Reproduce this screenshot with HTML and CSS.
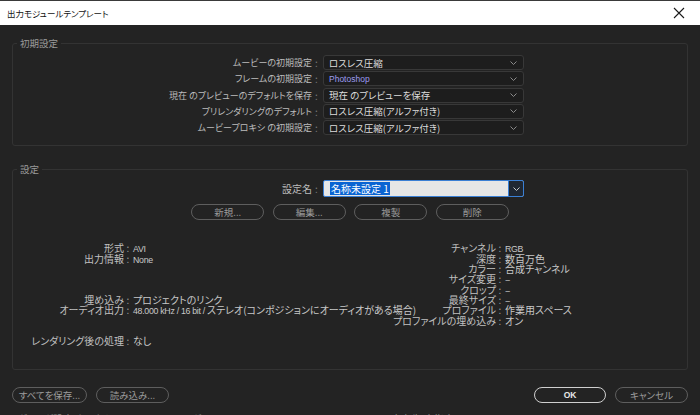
FILE: index.html
```html
<!DOCTYPE html>
<html lang="ja">
<head>
<meta charset="utf-8">
<title>出力モジュールテンプレート</title>
<link rel="stylesheet" href="styles.css">
</head>
<body>
<div class="window">
  <div class="titlebar">
    <span class="title">出力モジュールテンプレート</span>
    <svg class="close" width="12" height="12" viewBox="0 0 12 12"><path d="M1 1 L11 11 M11 1 L1 11" stroke="#1a1a1a" stroke-width="1.1" fill="none"/></svg>
  </div>
  <div class="content">
    <fieldset class="group group-defaults">
      <legend>初期設定</legend>
      <div class="form-grid">
        <span class="lbl">ムービーの初期設定</span><span class="colon">:</span>
        <div class="select"><span>ロスレス圧縮</span><svg class="chev" width="7" height="4" viewBox="0 0 7 4"><path d="M0.5 0.5 L3.5 3.5 L6.5 0.5" stroke="#8a8a8a" fill="none"/></svg></div>
        <span class="lbl">フレームの初期設定</span><span class="colon">:</span>
        <div class="select"><span class="ps">Photoshop</span><svg class="chev" width="7" height="4" viewBox="0 0 7 4"><path d="M0.5 0.5 L3.5 3.5 L6.5 0.5" stroke="#8a8a8a" fill="none"/></svg></div>
        <span class="lbl">現在 のプレビューのデフォルトを保存</span><span class="colon">:</span>
        <div class="select"><span>現在 のプレビューを保存</span><svg class="chev" width="7" height="4" viewBox="0 0 7 4"><path d="M0.5 0.5 L3.5 3.5 L6.5 0.5" stroke="#8a8a8a" fill="none"/></svg></div>
        <span class="lbl">プリレンダリングのデフォルト</span><span class="colon">:</span>
        <div class="select"><span>ロスレス圧縮（アルファ付き）</span><svg class="chev" width="7" height="4" viewBox="0 0 7 4"><path d="M0.5 0.5 L3.5 3.5 L6.5 0.5" stroke="#8a8a8a" fill="none"/></svg></div>
        <span class="lbl">ムービープロキシ の初期設定</span><span class="colon">:</span>
        <div class="select"><span>ロスレス圧縮（アルファ付き）</span><svg class="chev" width="7" height="4" viewBox="0 0 7 4"><path d="M0.5 0.5 L3.5 3.5 L6.5 0.5" stroke="#8a8a8a" fill="none"/></svg></div>
      </div>
    </fieldset>

    <fieldset class="group group-settings">
      <legend>設定</legend>
      <div class="form-grid name-row">
        <span class="lbl">設定名</span><span class="colon">:</span>
        <div class="combo">
          <span class="combo-text"><span class="selected">名称未設定 1</span></span>
          <span class="combo-btn"><svg width="7" height="4" viewBox="0 0 7 4"><path d="M0.5 0.5 L3.5 3.5 L6.5 0.5" stroke="#c8c8c8" fill="none"/></svg></span>
        </div>
      </div>
      <div class="btn-row">
        <button class="pill">新規...</button>
        <button class="pill">編集...</button>
        <button class="pill">複製</button>
        <button class="pill">削除</button>
      </div>
      <div class="info">
        <div class="info-block left">
          <span class="k">形式</span><span class="c">:</span><span class="v"><span class="lat">AVI</span></span>
          <span class="k">出力情報</span><span class="c">:</span><span class="v"><span class="lat">None</span></span>
          <span class="blank"></span><span class="blank"></span><span class="blank"></span>
          <span class="k">埋め込み</span><span class="c">:</span><span class="v">プロジェクトのリンク</span>
          <span class="k">オーディオ出力</span><span class="c">:</span><span class="v"><span class="lat">48.000 kHz / 16 bit / </span>ステレオ（コンポジションにオーディオがある場合）</span>
          <span class="blank"></span><span class="blank"></span>
          <span class="k">レンダリング後の処理</span><span class="c">:</span><span class="v">なし</span>
        </div>
        <div class="info-block right">
          <span class="k">チャンネル</span><span class="c">:</span><span class="v"><span class="lat">RGB</span></span>
          <span class="k">深度</span><span class="c">:</span><span class="v">数百万色</span>
          <span class="k">カラー</span><span class="c">:</span><span class="v">合成チャンネル</span>
          <span class="k">サイズ変更</span><span class="c">:</span><span class="v">–</span>
          <span class="k">クロップ</span><span class="c">:</span><span class="v">–</span>
          <span class="k">最終サイズ</span><span class="c">:</span><span class="v">–</span>
          <span class="k">プロファイル</span><span class="c">:</span><span class="v">作業用スペース</span>
          <span class="k">プロファイルの埋め込み</span><span class="c">:</span><span class="v">オン</span>
        </div>
      </div>
    </fieldset>

    <div class="footer">
      <div class="footer-group">
        <button class="pill wide">すべてを保存...</button>
        <button class="pill">読み込み...</button>
      </div>
      <div class="footer-group">
        <button class="pill primary">OK</button>
        <button class="pill">キャンセル</button>
      </div>
    </div>
  </div>
  <div class="under">
    <span>レンダリング設定：カスタム</span>
    <span>ログ：</span>
    <span>エラーのみ</span>
    <span>出力先：未指定</span>
  </div>
</div>
</body>
</html>
```

FILE: styles.css
```css
* { box-sizing: border-box; }

html, body {
  margin: 0;
  padding: 0;
  background: #232323;
  height: 415px;
  overflow: hidden;
}

body {
  font-family: "Noto Sans CJK JP", "Noto Sans", sans-serif;
  font-size: 10px;
  color: #bdbdbd;
  font-feature-settings: "palt" 1;
  font-variant-east-asian: proportional-width;
}

.window {
  width: 700px;
  height: 415px;
  overflow: hidden;
}

.titlebar {
  height: 25px;
  background: #ffffff;
  border-top: 1px solid #3a3a3a;
  display: flex;
  align-items: center;
  justify-content: space-between;
  padding: 0 15px 0 7px;
}

.title {
  font-size: 8.5px;
  color: #111;
}

.close { display: block; }

.content {
  padding: 0 12px;
}

.group {
  margin: 0;
  border: 1px solid #333333;
  border-radius: 3px;
  padding: 0;
  min-width: 0;
}

.group legend {
  margin-left: 4px;
  padding: 0 3px;
  font-size: 9.5px;
  line-height: 12px;
  color: #9a9a9a;
}

.group-defaults {
  margin-top: 12px;
  padding: 6px 0 10px;
}

.form-grid {
  display: grid;
  grid-template-columns: 299px 9px 203px;
  column-gap: 0;
  row-gap: 1.3px;
  align-items: center;
}

.lbl {
  text-align: right;
  white-space: nowrap;
  line-height: 15px;
  font-size: 9px;
  color: #bcbcbc;
}

.colon {
  text-align: center;
  color: #7a7a7a;
  line-height: 15px;
}

.select {
  height: 15px;
  margin-left: 2px;
  border: 1px solid #383838;
  border-radius: 3px;
  background: #1d1d1d;
  display: flex;
  align-items: center;
  justify-content: space-between;
  padding: 0 6px 0 5px;
  color: #dcdcdc;
  font-size: 9.5px;
}

.select .ps {
  color: #9c9cf0;
  font-family: "Liberation Sans", sans-serif;
  font-size: 8.5px;
}

.chev { display: block; }

.group-settings {
  margin-top: 17px;
  padding: 5px 0 22px;
}

.name-row .lbl,
.name-row .colon { line-height: 16px; font-size: 10px; }

.combo {
  margin-left: 2px;
  height: 17px;
  display: flex;
  border: 1px solid #3a7fd4;
  border-radius: 2px;
  background: #e6e6e6;
  overflow: hidden;
}

.combo-text {
  flex: 1;
  display: flex;
  align-items: center;
  padding-left: 6px;
}

.selected {
  background: #0a64d2;
  color: #ffffff;
  font-size: 10px;
  line-height: 13px;
  padding: 0 1px;
}

.combo-btn {
  width: 15px;
  background: #1f2732;
  border-left: 1px solid #3a7fd4;
  display: flex;
  align-items: center;
  justify-content: center;
}

.btn-row {
  display: flex;
  justify-content: center;
  gap: 8.5px;
  margin-top: 7px;
}

.pill {
  font-family: inherit;
  font-feature-settings: "palt" 1;
  font-size: 9.5px;
  height: 16px;
  width: 73px;
  padding: 0;
  border: 1px solid #5e5e5e;
  border-radius: 8px;
  background: transparent;
  color: #9c9c9c;
  line-height: 14px;
}

.pill.wide { width: 75px; }

.pill.primary {
  width: 72px;
  border-color: #cfcfcf;
  color: #e8e8e8;
  font-family: "Liberation Sans", sans-serif;
  font-weight: bold;
  font-size: 8.5px;
}

.info {
  display: grid;
  grid-template-columns: 370px auto;
  margin-top: 23px;
}

.info-block {
  display: grid;
  grid-auto-rows: 10.35px;
  line-height: 10.35px;
  white-space: nowrap;
  align-content: start;
}

.info-block.left { grid-template-columns: 111px 8px auto; }
.info-block.right { grid-template-columns: 113px 8px auto; }

.info-block .k {
  text-align: right;
  color: #c0c0c0;
}

.info-block .c {
  text-align: center;
  color: #9a9a9a;
}

.info-block .v {
  padding-left: 1px;
  color: #c8c8c8;
}

.lat {
  font-family: "Liberation Sans", sans-serif;
  font-size: 8.8px;
  letter-spacing: -0.3px;
}

.info-block .blank { grid-column: 1 / -1; }

.footer {
  display: flex;
  justify-content: space-between;
  margin-top: 17px;
}

.footer-group {
  display: flex;
  gap: 9px;
}

.under {
  display: flex;
  gap: 70px;
  margin-top: 10px;
  font-size: 10px;
  line-height: 12px;
  color: #8a8a8a;
  white-space: nowrap;
}
```
